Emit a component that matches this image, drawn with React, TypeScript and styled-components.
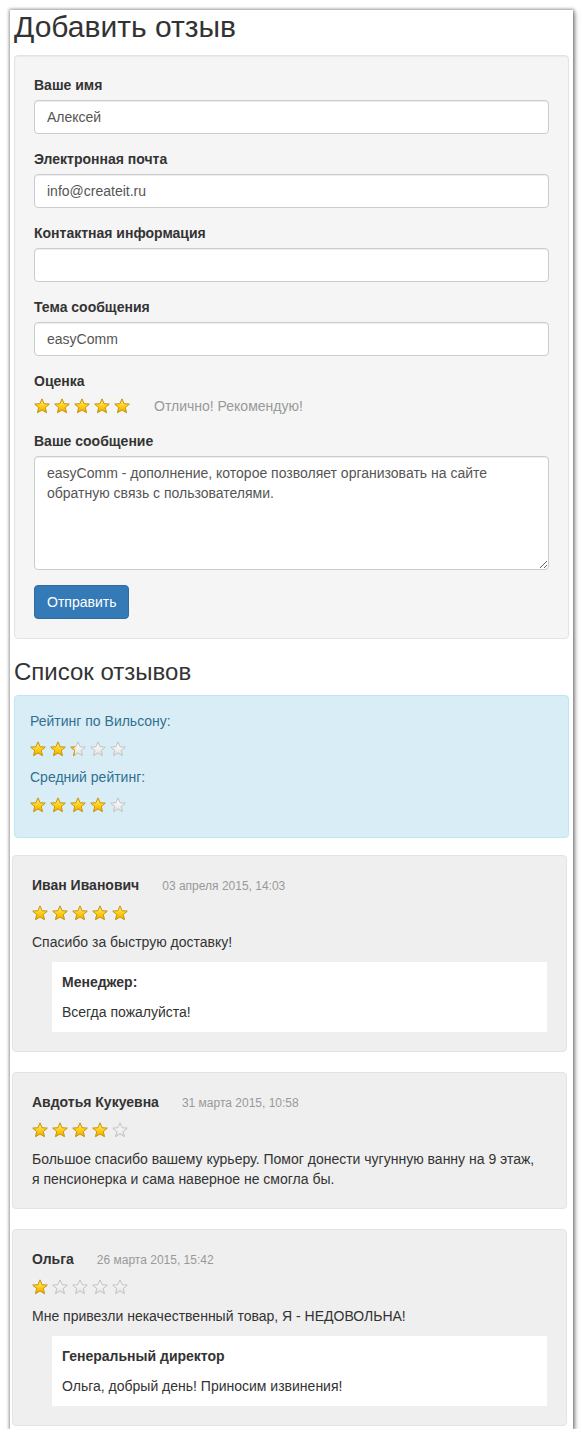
import React, { useId } from 'react';
import styled, { createGlobalStyle } from 'styled-components';

const GlobalStyle = createGlobalStyle`
  body {
    margin: 0;
    background: #fff;
    font-family: "Liberation Sans", Arial, sans-serif;
    font-size: 14px;
    line-height: 20px;
    color: #333;
  }
  * { box-sizing: border-box; }
`;

// the captured window, with its drop shadow
const Frame = styled.div`
  margin: 10px 0 0 10px;
  width: 563px;
  min-height: 1419px;
  padding: 0 4px;
  background: #fff;
  box-shadow: 0 0 3px 1px rgba(0, 0, 0, 0.35), 2px 2px 5px rgba(0, 0, 0, 0.35);
`;

const Title = styled.h2`
  margin: 2px 0 12px;
  font-size: 30px;
  font-weight: 400;
  line-height: 33px;
  color: #333;
`;

const SubTitle = styled.h3`
  margin: 20px 0 10px;
  font-size: 24px;
  font-weight: 400;
  line-height: 1.1;
  color: #333;
`;

const Well = styled.form`
  padding: 19px;
  background: #f5f5f5;
  border: 1px solid #e3e3e3;
  border-radius: 4px;
  box-shadow: inset 0 1px 1px rgba(0, 0, 0, 0.05);
`;

const FormGroup = styled.div`
  margin-bottom: 15px;
`;

const Label = styled.label`
  display: block;
  margin-bottom: 5px;
  font-weight: 700;
`;

const Input = styled.input`
  display: block;
  width: 100%;
  height: 34px;
  padding: 6px 12px;
  font: inherit;
  color: #555;
  background: #fff;
  border: 1px solid #ccc;
  border-radius: 4px;
  box-shadow: inset 0 1px 1px rgba(0, 0, 0, 0.075);
  outline: none;
`;

const TextArea = styled.textarea`
  display: block;
  width: 100%;
  height: 114px;
  padding: 6px 12px;
  font: inherit;
  line-height: 20px;
  color: #555;
  background: #fff;
  border: 1px solid #ccc;
  border-radius: 4px;
  box-shadow: inset 0 1px 1px rgba(0, 0, 0, 0.075);
  outline: none;
`;

const RatingRow = styled.div`
  display: flex;
  align-items: center;
  height: 20px;
`;

const RatingHint = styled.span`
  margin-left: 20px;
  color: #999;
`;

const Button = styled.button`
  display: inline-block;
  height: 34px;
  padding: 6px 12px;
  font: inherit;
  color: #fff;
  background: #337ab7;
  border: 1px solid #2e6da4;
  border-radius: 4px;
`;

const Alert = styled.div`
  margin-bottom: 17px;
  padding: 15px;
  color: #31708f;
  background: #d9edf7;
  border: 1px solid #bce8f1;
  border-radius: 4px;
`;

const StarLine = styled.div<{ $top?: number; $bottom?: number }>`
  display: flex;
  height: 20px;
  align-items: center;
  margin: ${(p) => p.$top ?? 8}px 0 ${(p) => p.$bottom ?? 8}px;
`;

const StarBox = styled.span`
  display: inline-flex;
  width: 20px;
  height: 20px;
  align-items: center;
`;

const Card = styled.div`
  margin: 0 2px 20px -2px;
  padding: 19px;
  background: #efefef;
  border: 1px solid #e3e3e3;
  border-radius: 4px;
`;

const CardHead = styled.div`
  display: flex;
  align-items: baseline;
`;

const Author = styled.span`
  font-weight: 700;
`;

const DateText = styled.span`
  margin-left: 23px;
  font-size: 12px;
  color: #999;
`;

const CardText = styled.div`
  padding-right: 6px;
`;

const Reply = styled.div`
  margin: 10px 0 0 20px;
  padding: 10px;
  background: #fff;
`;

const ReplyAuthor = styled.div`
  margin-bottom: 10px;
  font-weight: 700;
`;

const STAR = 'M8 0.9 L10 5.75 L15.23 6.15 L11.23 9.55 L12.47 14.65 L8 11.9 L3.53 14.65 L4.77 9.55 L0.77 6.15 L6 5.75 Z';

const Star: React.FC<{ fill: number }> = ({ fill }) => {
  const id = useId().replace(/:/g, '');
  return (
    <svg width="16" height="16" viewBox="0 0 16 16">
      <defs>
        <linearGradient id={`g${id}`} x1="0" y1="0" x2="0" y2="1">
          <stop offset="0" stopColor="#fff38a" />
          <stop offset="0.5" stopColor="#ffd21c" />
          <stop offset="1" stopColor="#f2a900" />
        </linearGradient>
        <linearGradient id={`e${id}`} x1="0" y1="0" x2="0" y2="1">
          <stop offset="0" stopColor="#ffffff" />
          <stop offset="1" stopColor="#e2e2e2" />
        </linearGradient>
        <clipPath id={`c${id}`}>
          <rect x="0" y="0" width={16 * fill} height="16" />
        </clipPath>
      </defs>
      <path d={STAR} fill={`url(#e${id})`} stroke="#bdbdbd" strokeWidth="0.9" strokeLinejoin="round" />
      {fill > 0 && (
        <path
          d={STAR}
          fill={`url(#g${id})`}
          stroke="#c99200"
          strokeWidth="0.9"
          strokeLinejoin="round"
          clipPath={`url(#c${id})`}
        />
      )}
    </svg>
  );
};

const Stars: React.FC<{ value: number }> = ({ value }) => (
  <>
    {[0, 1, 2, 3, 4].map((i) => (
      <StarBox key={i}>
        <Star fill={Math.max(0, Math.min(1, value - i))} />
      </StarBox>
    ))}
  </>
);

interface Review {
  author: string;
  date: string;
  rating: number;
  text: string;
  reply?: { who: string; text: string };
}

const reviews: Review[] = [
  {
    author: 'Иван Иванович',
    date: '03 апреля 2015, 14:03',
    rating: 5,
    text: 'Спасибо за быструю доставку!',
    reply: { who: 'Менеджер:', text: 'Всегда пожалуйста!' },
  },
  {
    author: 'Авдотья Кукуевна',
    date: '31 марта 2015, 10:58',
    rating: 4,
    text: 'Большое спасибо вашему курьеру. Помог донести чугунную ванну на 9 этаж, я пенсионерка и сама наверное не смогла бы.',
  },
  {
    author: 'Ольга',
    date: '26 марта 2015, 15:42',
    rating: 1,
    text: 'Мне привезли некачественный товар, Я - НЕДОВОЛЬНА!',
    reply: { who: 'Генеральный директор', text: 'Ольга, добрый день! Приносим извинения!' },
  },
];

const App: React.FC = () => (
  <>
    <GlobalStyle />
    <Frame>
      <Title>Добавить отзыв</Title>
      <Well onSubmit={(e) => e.preventDefault()}>
        <FormGroup>
          <Label>Ваше имя</Label>
          <Input defaultValue="Алексей" />
        </FormGroup>
        <FormGroup>
          <Label>Электронная почта</Label>
          <Input defaultValue="info@createit.ru" />
        </FormGroup>
        <FormGroup>
          <Label>Контактная информация</Label>
          <Input defaultValue="" />
        </FormGroup>
        <FormGroup>
          <Label>Тема сообщения</Label>
          <Input defaultValue="easyComm" />
        </FormGroup>
        <FormGroup>
          <Label>Оценка</Label>
          <RatingRow>
            <Stars value={5} />
            <RatingHint>Отлично! Рекомендую!</RatingHint>
          </RatingRow>
        </FormGroup>
        <FormGroup>
          <Label>Ваше сообщение</Label>
          <TextArea
            rows={5}
            defaultValue="easyComm - дополнение, которое позволяет организовать на сайте обратную связь с пользователями."
          />
        </FormGroup>
        <Button type="submit">Отправить</Button>
      </Well>

      <SubTitle>Список отзывов</SubTitle>
      <Alert>
        <div>Рейтинг по Вильсону:</div>
        <StarLine>
          <Stars value={2.3} />
        </StarLine>
        <div>Средний рейтинг:</div>
        <StarLine $bottom={7}>
          <Stars value={4} />
        </StarLine>
      </Alert>

      {reviews.map((r) => (
        <Card key={r.author}>
          <CardHead>
            <Author>{r.author}</Author>
            <DateText>{r.date}</DateText>
          </CardHead>
          <StarLine $top={7} $bottom={9}>
            <Stars value={r.rating} />
          </StarLine>
          <CardText>{r.text}</CardText>
          {r.reply && (
            <Reply>
              <ReplyAuthor>{r.reply.who}</ReplyAuthor>
              <div>{r.reply.text}</div>
            </Reply>
          )}
        </Card>
      ))}
    </Frame>
  </>
);

export default App;
